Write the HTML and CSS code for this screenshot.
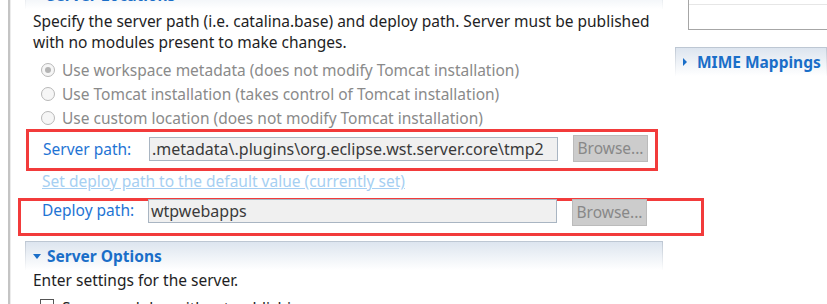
FILE: index.html
```html
<!DOCTYPE html>
<html lang="en">
<head>
    <meta charset="UTF-8">
    <title>Tomcat Overview - Server Locations</title>
    <link rel="stylesheet" href="styles.css">
</head>
<body>
    <div class="page">
        <div class="rule"></div>

        <div class="main">
            <div class="section-head cut"><span class="tri-down"></span>Server Locations</div>
            <p class="desc first">Specify the server path (i.e. catalina.base) and deploy path. Server must be published<br>with no modules present to make changes.</p>

            <div class="radios">
                <label class="radio"><span class="dot on"></span>Use workspace metadata (does not modify Tomcat installation)</label>
                <label class="radio"><span class="dot"></span>Use Tomcat installation (takes control of Tomcat installation)</label>
                <label class="radio"><span class="dot"></span>Use custom location (does not modify Tomcat installation)</label>
            </div>

            <div class="mark mark-server">
                <div class="path-row">
                    <span class="label">Server path:</span>
                    <span class="field">.metadata\.plugins\org.eclipse.wst.server.core\tmp2</span>
                    <span class="btn">Browse...</span>
                </div>
            </div>

            <a class="link">Set deploy path to the default value (currently set)</a>

            <div class="mark mark-deploy">
                <div class="path-row">
                    <span class="label">Deploy path:</span>
                    <span class="field">wtpwebapps</span>
                    <span class="btn">Browse...</span>
                </div>
            </div>

            <div class="section-head options"><span class="tri-down"></span>Server Options</div>
            <p class="desc">Enter settings for the server.</p>
            <label class="check"><span class="box"></span>Serve modules without publishing</label>
        </div>

        <div class="side">
            <div class="table">
                <div class="row"></div>
                <div class="row"></div>
            </div>
            <div class="section-head side-head"><span class="tri-right"></span>MIME Mappings</div>
        </div>
    </div>
</body>
</html>
```

FILE: styles.css
```css
body {
    margin: 0;
    padding: 0;
    background: #ffffff;
    font-family: 'Noto Sans', 'Open Sans', sans-serif;
    font-size: 15.5px;
    color: #1e1e24;
    overflow: hidden;
}
.page {
    display: flex;
    width: 827px;
    height: 304px;
    overflow: hidden;
}
.rule {
    flex: none;
    width: 2px;
    margin-left: 8px;
    background: #c4c4c4;
    border-right: 1px solid #ececec;
}
.main {
    flex: none;
    width: 638px;
    margin-left: 14px;
}
.section-head {
    height: 28px;
    line-height: 28px;
    display: flex;
    align-items: center;
    padding-left: 7px;
    border: 1px solid;
    border-bottom: 0;
    border-image: linear-gradient(#bcc6d2, #ffffff) 1;
    background: linear-gradient(#dde5ef, #ffffff 28px);
    color: #1a6ec8;
    font-weight: bold;
}
.section-head.cut {
    margin-top: -20px;
}
.section-head.options {
    margin-top: 5px;
}
.tri-down {
    width: 0;
    height: 0;
    border-left: 4px solid transparent;
    border-right: 4px solid transparent;
    border-top: 5px solid #1a6ec8;
    margin-right: 6px;
}
.tri-right {
    width: 0;
    height: 0;
    border-top: 4px solid transparent;
    border-bottom: 4px solid transparent;
    border-left: 4px solid #1a6ec8;
    margin-right: 10px;
}
.desc {
    margin: 0 0 0 8px;
    line-height: 21px;
}
.desc.first {
    margin-top: 2px;
}
.radios {
    margin-top: 5px;
    padding-left: 16px;
}
.radio {
    display: flex;
    align-items: center;
    height: 24px;
    color: #8a8a8a;
}
.dot {
    width: 12px;
    height: 12px;
    border: 1px solid #b8b8b8;
    border-radius: 50%;
    background: #f6f6f6;
    margin-right: 7px;
    display: flex;
    align-items: center;
    justify-content: center;
}
.dot.on::after {
    content: "";
    width: 6px;
    height: 6px;
    border-radius: 50%;
    background: #b4b4b4;
}
.mark {
    border: 3px solid #f23b3b;
}
.mark-server {
    margin: -1px 5px 0 1px;
    padding: 3px 0 6px 14px;
}
.mark-deploy {
    margin: 0 -41px 0 -7px;
    padding: 0 0 7px 21px;
}
.mark-deploy .path-row {
    margin-top: -2px;
    align-items: flex-start;
}
.path-row {
    display: flex;
    align-items: center;
    height: 27px;
}
.label {
    width: 106px;
    color: #1f74d4;
}
.field {
    width: 405px;
    height: 22px;
    line-height: 22px;
    padding-left: 2px;
    border: 1px solid #a9b5c2;
    background: #f0f0f0;
    color: #3a3a3a;
    font-size: 16px;
    white-space: nowrap;
    overflow: hidden;
}
.btn {
    width: 73px;
    height: 25px;
    line-height: 25px;
    margin-left: 15px;
    border: 1px solid #bbbbbb;
    background: #cccccc;
    color: #888888;
    text-align: center;
}
.link {
    display: block;
    height: 27px;
    line-height: 21px;
    padding-left: 17px;
    color: #a6cff2;
    text-decoration: underline;
}
.check {
    display: flex;
    align-items: flex-start;
    margin-top: 8px;
    padding-left: 15px;
    line-height: 18px;
}
.box {
    width: 12px;
    height: 12px;
    border: 1px solid #555555;
    background: #ffffff;
    margin-right: 8px;
}
.side {
    flex: 1;
    margin-left: 12px;
}
.table {
    margin: -30px 0 0 13px;
    height: 59px;
    border-left: 1px solid #a6a6a6;
    border-bottom: 1px solid #a6a6a6;
}
.row {
    height: 34px;
    border-bottom: 1px solid #e6e6e6;
}
.row + .row {
    border-bottom: 0;
}
.side-head {
    margin-top: 17px;
}
```
